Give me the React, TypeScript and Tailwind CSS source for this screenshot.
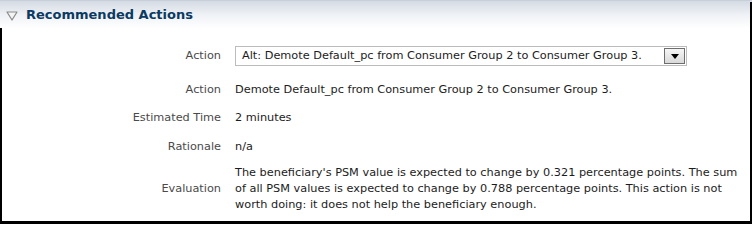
import React from "react";

const Row = ({ label, children, className = "" }: { label: string; children: React.ReactNode; className?: string }) => (
  <div className={`flex items-center ${className}`}>
    <div className="w-[221px] shrink-0 text-right text-[#4a4a4a]">{label}</div>
    <div className="ml-[14px] text-[#1c1c1c]">{children}</div>
  </div>
);

export default function App() {
  return (
    <div
      className="relative w-[752px] h-[224px] bg-white overflow-hidden text-[11.3px] leading-[16px]"
      style={{ fontFamily: '"DejaVu Sans", Tahoma, sans-serif' }}
    >
      {/* header */}
      <div className="h-[28px] flex items-center bg-gradient-to-b from-[#d5dbe4] via-[#eef1f5] to-white border-t border-[#c8ced8]">
        <svg width="12" height="10" viewBox="0 0 12 10" className="ml-[6px] mt-[2px]">
          <path d="M1 1 L11 1 L6 9 Z" fill="#f4f4f4" stroke="#8a8a8a" strokeWidth="1.2" strokeLinejoin="round" />
        </svg>
        <div className="ml-[8px] text-[13px] font-bold text-[#0b3a62]">Recommended Actions</div>
      </div>

      <div className="flex flex-col">
        <Row label="Action" className="mt-[18px] h-[20px]">
          <div className="w-[452px] h-[20px] border border-[#bcbcbc] flex items-center justify-between pl-[6px] pr-[1px]">
            <span>Alt: Demote Default_pc from Consumer Group 2 to Consumer Group 3.</span>
            <div className="w-[21px] h-[16px] border border-[#6e6e6e] bg-gradient-to-b from-[#f6f6f6] to-[#d9d9d9] flex items-center justify-center">
              <svg width="8" height="5" viewBox="0 0 8 5">
                <path d="M0 0 L8 0 L4 5 Z" fill="#000" />
              </svg>
            </div>
          </div>
        </Row>
        <Row label="Action" className="mt-[16px]">
          Demote Default_pc from Consumer Group 2 to Consumer Group 3.
        </Row>
        <Row label="Estimated Time" className="mt-[12px]">
          2 minutes
        </Row>
        <Row label="Rationale" className="mt-[13px]">
          n/a
        </Row>
        <Row label="Evaluation" className="mt-[10px]">
          <div className="w-[505px]">
            The beneficiary's PSM value is expected to change by 0.321 percentage points. The sum of all PSM values is
            expected to change by 0.788 percentage points. This action is not worth doing: it does not help the
            beneficiary enough.
          </div>
        </Row>
      </div>

      {/* frame borders */}
      <div className="absolute left-0 top-[28px] bottom-0 w-[2px] bg-black" />
      <div className="absolute right-0 top-[2px] bottom-0 w-[2px] bg-black" />
      <div className="absolute left-0 right-0 bottom-0 h-[3px] bg-black" />
    </div>
  );
}
